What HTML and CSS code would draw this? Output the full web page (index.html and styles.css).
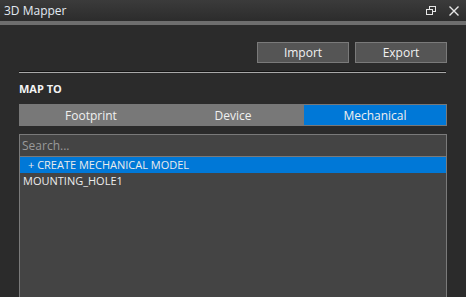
FILE: index.html
```html
<!DOCTYPE html>
<html>
<head>
<meta charset="utf-8">
<link rel="stylesheet" href="styles.css">
</head>
<body>
<div class="window">
  <div class="titlebar">
    <span class="title">3D Mapper</span>
    <div class="wincontrols">
      <svg class="ico" width="10" height="9" viewBox="0 0 10 9"><rect x="3.5" y="0.5" width="6" height="5" fill="none" stroke="#e6e6e6"/><rect x="0.5" y="3.5" width="6" height="5" fill="#333" stroke="#e6e6e6"/></svg>
      <svg class="ico close" width="10" height="10" viewBox="0 0 10 10"><path d="M0.5 0.5 L9.5 9.5 M9.5 0.5 L0.5 9.5" stroke="#e6e6e6" stroke-width="1.4"/></svg>
    </div>
  </div>
  <div class="stripe"></div>
  <div class="content">
    <div class="actions">
      <button class="btn">Import</button>
      <button class="btn">Export</button>
    </div>
    <div class="sep"></div>
    <div class="label">MAP TO</div>
    <div class="tabs">
      <div class="tab">Footprint</div>
      <div class="tab">Device</div>
      <div class="tab active">Mechanical</div>
    </div>
    <div class="listbox">
      <div class="search">Search...</div>
      <div class="item selected">+ CREATE MECHANICAL MODEL</div>
      <div class="item plain">MOUNTING_HOLE1</div>
    </div>
  </div>
</div>
</body>
</html>
```
FILE: styles.css
```css
* { box-sizing: border-box; }
html, body { margin: 0; padding: 0; }
body {
  width: 466px;
  height: 297px;
  overflow: hidden;
  background: #2b2b2b;
  font-family: "Open Sans", "Noto Sans", sans-serif;
  color: #ececec;
}
.window { display: flex; flex-direction: column; height: 297px; }
.titlebar {
  height: 21px;
  background: linear-gradient(#3b3b3b, #2c2c2c);
  display: flex;
  align-items: center;
  justify-content: space-between;
  padding: 0 7px 0 4px;
}
.title { font-size: 12px; color: #e2e9f2; line-height: 21px; }
.wincontrols { display: flex; align-items: center; gap: 13px; }
.ico { display: block; }
.stripe { height: 4px; background: #6e6e6e; }
.content { padding: 0 20px 0 19px; flex: 1; display: flex; flex-direction: column; }
.actions { display: flex; justify-content: flex-end; gap: 6px; margin-top: 17px; margin-right: -1px; }
.btn {
  width: 92px;
  height: 21px;
  background: #555;
  border: 1px solid #7a7a7a;
  color: #f2f2f2;
  font-family: inherit;
  font-size: 12px;
  padding: 0;
}
.sep { margin-top: 8px; height: 2px; border-top: 1px solid #141414; border-bottom: 1px solid #a8a8a8; }
.label { margin-top: 9px; font-size: 11px; font-weight: 700; color: #f4f4f4; line-height: 14px; }
.tabs {
  margin-top: 8px;
  height: 22px;
  display: grid;
  grid-template-columns: 1fr 1fr 1fr;
  background: #787878;
  border: 1px solid #787878;
  margin-right: -1px;
}
.tab { font-size: 12px; display: flex; align-items: center; justify-content: center; color: #f0f0f0; }
.tab.active { background: #0078d7; }
.listbox {
  margin-top: 8px;
  flex: 1;
  background: #444;
  border: 1px solid #7a7a7a;
  border-bottom: none;
  margin-right: -1px;
}
.search {
  height: 22px;
  border-bottom: 1px solid #7a7a7a;
  font-size: 12px;
  color: #9a9a9a;
  padding-left: 2px;
  line-height: 21px;
}
.item { font-size: 11px; line-height: 16px; height: 16px; white-space: nowrap; }
.item.selected { background: #0078d7; padding-left: 8px; }
.item.plain { padding-left: 3px; }
```
